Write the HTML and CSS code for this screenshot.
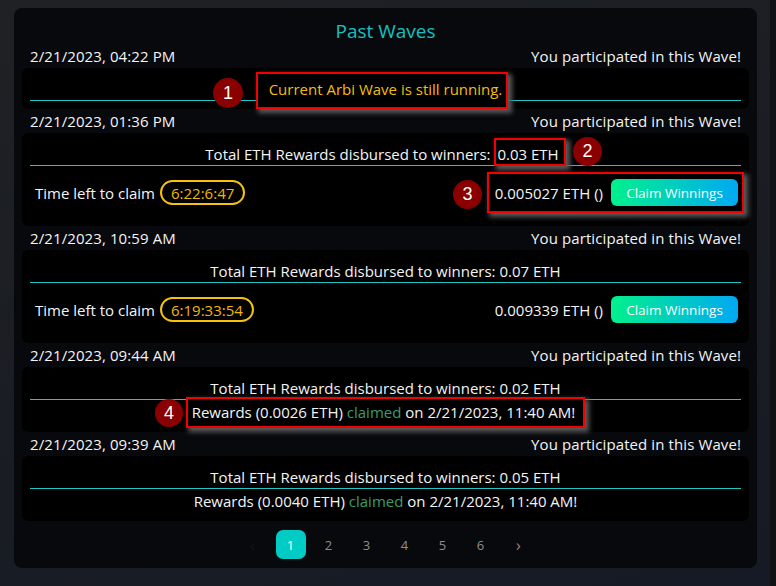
FILE: index.html
```html
<!DOCTYPE html>
<html lang="en">
<head>
<meta charset="utf-8">
<title>Past Waves</title>
<link rel="stylesheet" href="styles.css">
</head>
<body>
<main class="panel">
  <h2 class="title">Past Waves</h2>

  <section class="wave">
    <div class="wave-head"><span>2/21/2023, 04:22 PM</span><span>You participated in this Wave!</span></div>
    <div class="card card-running">
      <div class="line"><span class="note note-1 running">Current Arbi Wave is still running.</span></div>
      <div class="divider"></div>
    </div>
  </section>

  <section class="wave">
    <div class="wave-head"><span>2/21/2023, 01:36 PM</span><span>You participated in this Wave!</span></div>
    <div class="card card-claim">
      <div class="line">Total ETH Rewards disbursed to winners: <span class="note note-2">0.03 ETH</span></div>
      <div class="divider"></div>
      <div class="claim-row">
        <div class="time-left">Time left to claim <span class="timer">6:22:6:47</span></div>
        <div class="claim-box marked"><span>0.005027 ETH ()</span><button class="claim-btn">Claim Winnings</button></div>
      </div>
    </div>
  </section>

  <section class="wave">
    <div class="wave-head"><span>2/21/2023, 10:59 AM</span><span>You participated in this Wave!</span></div>
    <div class="card card-claim">
      <div class="line">Total ETH Rewards disbursed to winners: 0.07 ETH</div>
      <div class="divider"></div>
      <div class="claim-row">
        <div class="time-left">Time left to claim <span class="timer">6:19:33:54</span></div>
        <div class="claim-box"><span>0.009339 ETH ()</span><button class="claim-btn">Claim Winnings</button></div>
      </div>
    </div>
  </section>

  <section class="wave">
    <div class="wave-head"><span>2/21/2023, 09:44 AM</span><span>You participated in this Wave!</span></div>
    <div class="card card-claimed">
      <div class="line">Total ETH Rewards disbursed to winners: 0.02 ETH</div>
      <div class="divider"></div>
      <div class="rewards"><span class="note note-4">Rewards (0.0026 ETH) <span class="claimed">claimed</span> on 2/21/2023, 11:40 AM!</span></div>
    </div>
  </section>

  <section class="wave">
    <div class="wave-head"><span>2/21/2023, 09:39 AM</span><span>You participated in this Wave!</span></div>
    <div class="card card-claimed">
      <div class="line">Total ETH Rewards disbursed to winners: 0.05 ETH</div>
      <div class="divider"></div>
      <div class="rewards">Rewards (0.0040 ETH) <span class="claimed">claimed</span> on 2/21/2023, 11:40 AM!</div>
    </div>
  </section>

  <nav class="pager">
    <span class="page arrow dim">&lsaquo;</span>
    <span class="page active">1</span>
    <span class="page">2</span>
    <span class="page">3</span>
    <span class="page">4</span>
    <span class="page">5</span>
    <span class="page">6</span>
    <span class="page arrow">&rsaquo;</span>
  </nav>
</main>

<span class="badge badge-1">1</span>
<span class="badge badge-2">2</span>
<span class="badge badge-3">3</span>
<span class="badge badge-4">4</span>
</body>
</html>
```

FILE: styles.css
```css
html {
  background:
    linear-gradient(to right, transparent calc(100% - 6px), #101214 0),
    linear-gradient(160deg, #1f2125 0%, #1a1d23 50%, #151a26 100%);
  min-height: 100%;
}

body {
  margin: 0;
  padding: 8px 0 0 14px;
  font-family: "Open Sans", "Noto Sans", sans-serif;
  font-size: 15px;
  color: #f4f4f4;
}

.panel {
  box-sizing: border-box;
  width: 743px;
  height: 560px;
  padding: 10px 8px 9px;
  background: #08090c;
  border-radius: 8px;
  display: flex;
  flex-direction: column;
}

.title {
  margin: 0;
  text-align: center;
  font-size: 19px;
  font-weight: 400;
  line-height: 26px;
  color: #13c2c0;
}

.wave-head {
  display: flex;
  justify-content: space-between;
  align-items: center;
  height: 24px;
  padding: 0 8px;
  letter-spacing: 0.1px;
}

.card {
  background: #000;
  border-radius: 6px;
  padding: 10px 8px 0;
}

.card-running { padding-bottom: 8px; }
.card-claim { padding-bottom: 13px; }
.card-claimed { padding-bottom: 8px; }

.line {
  line-height: 22px;
  text-align: center;
}

.divider {
  height: 1px;
  background: #1fc6c4;
}

.running { color: #f2bd12; }

.note {
  position: relative;
  z-index: 2;
  background: #000;
  border: 2px solid #f40000;
  box-shadow: 3px 3px 5px 1px #5c5c5c;
}

.note-1 { padding: 5px 4px 8px 11px; margin-left: -7px; }
.note-2 { padding: 4px 5px 0 1px; }
.note-4 { padding: 3px 8px 4px 4px; }

.claim-row {
  display: flex;
  justify-content: space-between;
  align-items: center;
  margin: 6px -3px 0 0;
  padding-left: 5px;
}

.time-left {
  display: flex;
  align-items: center;
  gap: 5px;
}

.timer {
  box-sizing: border-box;
  height: 25px;
  display: inline-flex;
  align-items: center;
  padding: 0 9px;
  border: 2px solid #f5c20c;
  border-radius: 13px;
  color: #f2b705;
  font-size: 15px;
}

.claim-box {
  display: flex;
  align-items: center;
  gap: 8px;
  height: 37px;
  padding: 0 4px 0 6px;
  border: 2px solid transparent;
}

.claim-box.marked {
  position: relative;
  z-index: 2;
  border-color: #f40000;
  box-shadow: 3px 3px 5px 1px #5c5c5c;
}

.claim-btn {
  height: 27px;
  width: 127px;
  border: 0;
  border-radius: 6px;
  background: linear-gradient(90deg, #00f18c, #00a9f3);
  color: #fff;
  font-family: "Open Sans", "Noto Sans", sans-serif;
  font-size: 13.5px;
  padding: 0;
}

.rewards {
  line-height: 24px;
  text-align: center;
}

.claimed { color: #3b9c68; }

.pager {
  display: flex;
  justify-content: center;
  gap: 8px;
  margin-top: auto;
}

.page {
  width: 30px;
  height: 29px;
  display: flex;
  align-items: center;
  justify-content: center;
  font-size: 13px;
  color: #8d8d8d;
  border-radius: 7px;
}

.page.active {
  background: #00cbc5;
  color: #fff;
}

.page.arrow { font-size: 16px; }
.page.dim { color: #161616; }

.badge {
  position: absolute;
  z-index: 5;
  width: 30px;
  height: 30px;
  border-radius: 50%;
  background: #8a0000;
  color: #fff;
  font-family: "Liberation Sans", Arial, sans-serif;
  font-size: 18px;
  display: flex;
  align-items: center;
  justify-content: center;
}

.badge-1 { left: 213px; top: 78px; }
.badge-2 { left: 573px; top: 137px; width: 29px; height: 29px; }
.badge-3 { left: 453px; top: 180px; width: 29px; height: 29px; }
.badge-4 { left: 155px; top: 399px; width: 28px; height: 28px; }
```
